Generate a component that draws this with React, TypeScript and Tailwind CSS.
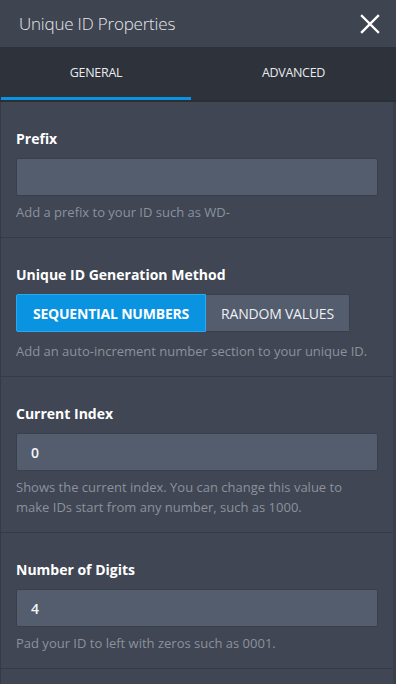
import React from 'react';

const font = { fontFamily: '"Open Sans", "Noto Sans", sans-serif' };

const Field = ({ value }: { value?: string }) => (
  <div className="h-[38px] rounded-[2px] border border-[#3a404b] bg-[#535d6e] px-[14px] flex items-center text-[14px] font-semibold text-[#f2f4f7]">
    {value}
  </div>
);

const Section = ({ label, help, helpGap = 'mt-[6px]', children }: { label: string; help: React.ReactNode; helpGap?: string; children: React.ReactNode }) => (
  <div className="border-b border-[#363b45] px-[15px] pt-[27px] pb-[15px]">
    <div className="text-[14px] leading-[20px] font-bold text-white mb-[9px]">{label}</div>
    {children}
    <div className={`${helpGap} text-[13px] leading-[20px] text-[#8b929d]`}>{help}</div>
  </div>
);

const App = () => {
  return (
    <div className="w-[396px] h-[684px] overflow-hidden bg-[#404653] flex flex-col" style={font}>
      <div className="h-[47px] shrink-0 bg-[#3e4450] flex items-center justify-between pl-[19px] pr-[16px]">
        <span className="text-[17px] text-[#e6e8ec] font-light tracking-[-0.2px]">Unique ID Properties</span>
        <svg width="20" height="20" viewBox="0 0 20 20" className="text-white">
          <path d="M2 2 L18 18 M18 2 L2 18" stroke="currentColor" strokeWidth="2.4" strokeLinecap="square" />
        </svg>
      </div>
      <div className="h-[55px] shrink-0 bg-[#2e323a] flex border-b-[2px] border-[#2a2e35]">
        <div className="w-[190px] ml-[1px] flex flex-col">
          <div className="flex-1 flex items-center justify-center pt-[3px] text-[12.5px] text-[#e8eaee] tracking-[-0.3px]">GENERAL</div>
          <div className="h-[3px] bg-[#0a93e0]" />
        </div>
        <div className="flex-1 flex items-center justify-center text-[12.5px] text-[#e8eaee] tracking-[-0.3px]">ADVANCED</div>
      </div>
      <div className="flex-1 border-l border-[#353a44] border-r-[3px] border-r-[#3a404b]">
        <Section label="Prefix" help="Add a prefix to your ID such as WD-">
          <Field />
        </Section>
        <Section label="Unique ID Generation Method" helpGap="mt-[9px]" help="Add an auto-increment number section to your unique ID.">
          <div className="flex h-[38px] text-[14px] tracking-[-0.2px]">
            <div className="w-[190px] flex items-center justify-center bg-[#0a93e0] border border-[#28a8f0] rounded-l-[2px] text-white font-bold">
              SEQUENTIAL NUMBERS
            </div>
            <div className="w-[144px] flex items-center justify-center bg-[#535d6e] border border-[#3a404b] border-l-0 rounded-r-[2px] text-[#eef0f3]">
              RANDOM VALUES
            </div>
          </div>
        </Section>
        <Section
          label="Current Index"
          help={<>Shows the current index. You can change this value to<br />make IDs start from any number, such as 1000.</>}
        >
          <Field value="0" />
        </Section>
        <Section label="Number of Digits" help="Pad your ID to left with zeros such as 0001.">
          <Field value="4" />
        </Section>
      </div>
    </div>
  );
};

export default App;
